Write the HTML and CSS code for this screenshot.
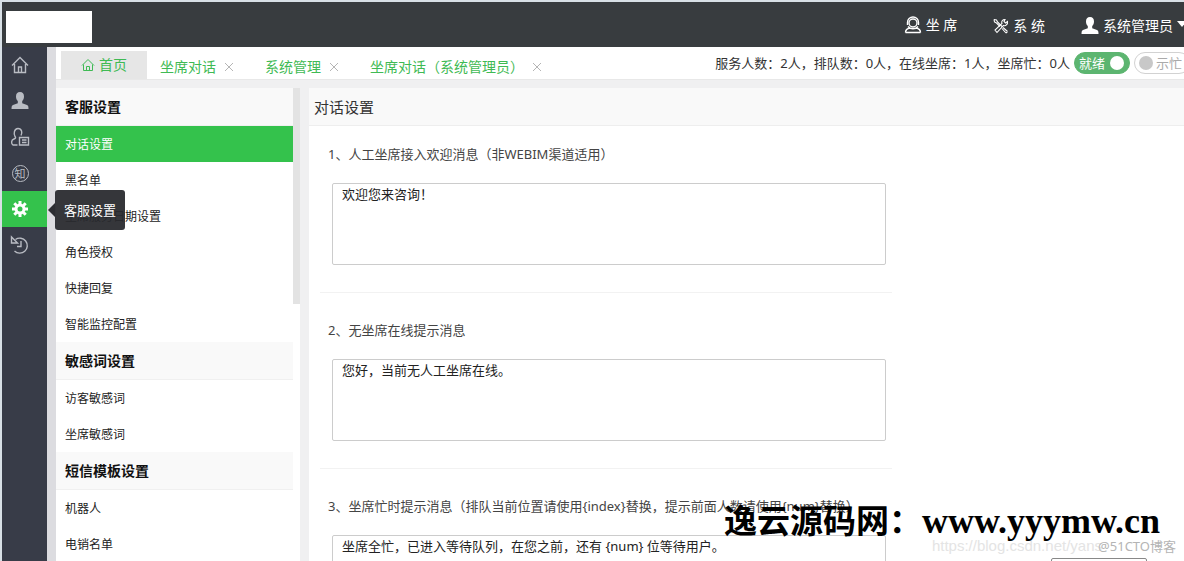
FILE: index.html
```html
<!DOCTYPE html>
<html lang="zh-CN">
<head>
<meta charset="utf-8">
<title>客服设置</title>
<link rel="stylesheet" href="styles.css">
</head>
<body>
<header class="topbar">
  <div class="logo"></div>
  <nav class="topnav">
    <a href="#"><svg viewBox="0 0 18 18" width="18" height="18"><circle cx="9" cy="7" r="4"/><path d="M3.500 9V6.500a5.500 5.500 0 0 1 11 0V9M4 10.500c2 3 8 3 10 0M1.500 16.500c0-3 2-4 4.500-4.500M16.500 16.500c0-3-2-4-4.500-4.500M1.500 16.500h15"/></svg>坐 席</a>
    <a href="#" class="low"><svg class="ico-tool" viewBox="0 0 16 16" width="16" height="16"><path d="M1 1.500l2.500.5 1 2L9 8.500M1 1.500l.5 2.500 2 1 3.500 3.500M10 9.500l4.500 4M9 10.500l4 4.500M14.500 13.500L13 15M14.500 3.500l-2 1.500-1.500-1.500 1-2c-2.500 0-4 2-3 4L2 12l2 2.500 6.500-7c2 .8 4.500-1 4-4z"/></svg>系 统</a>
    <a href="#" class="low"><svg class="ico-fill" viewBox="0 0 18 18" width="18" height="18"><path d="M9 0c2.700 0 4 1.700 4 4.500 0 2-.8 3.500-1.800 4.500v2.200l4.800 1.800c1 .4 1.500 1.200 1.500 4h-17c0-2.800.5-3.600 1.500-4l4.800-1.800V9C5.800 8 5 6.500 5 4.500 5 1.700 6.300 0 9 0z"/></svg>系统管理员<span class="caret"></span></a>
  </nav>
</header>
<div class="shell">
  <nav class="rail">
    <a href="#" aria-label="首页"><svg viewBox="0 0 18 18" width="18" height="18"><path d="M1 9.500L9 1.500l8 8M3.500 8v8.500h11V8M7.500 16.500V11h3v5.500"/></svg></a>
    <a href="#" aria-label="用户"><svg class="ico-fill" viewBox="0 0 18 18" width="18" height="18"><path d="M9 0c2.700 0 4 1.700 4 4.500 0 2-.8 3.500-1.800 4.500v2.200l4.800 1.800c1 .4 1.500 1.200 1.500 4h-17c0-2.800.5-3.600 1.500-4l4.800-1.800V9C5.800 8 5 6.500 5 4.500 5 1.700 6.300 0 9 0z"/></svg></a>
    <a href="#" aria-label="访客"><svg viewBox="0 0 20 20" width="20" height="20"><path d="M7.500 18H3c-2-1.500-2-5 1-6 2-.7 1.800-1.500 1-2.500C3.500 7 4 1.500 8 1.500S12.500 6 11 8.500M9.500 10.500h9v7.500h-9zM12 13h4.500M12 15.500h4.500"/></svg></a>
    <a href="#" aria-label="知识库"><span class="know">知</span></a>
    <a href="#" class="on" aria-label="客服设置"><svg class="gear" viewBox="0 0 18 18" width="18" height="18"><circle cx="9" cy="9" r="4"/><path d="M9 1v3M9 14v3M1 9h3M14 9h3M3.300 3.300l2.200 2.200M12.500 12.500l2.200 2.200M3.300 14.700l2.200-2.200M12.500 5.500l2.200-2.200"/></svg><span class="tip">客服设置</span></a>
    <a href="#" aria-label="历史"><svg viewBox="0 0 20 20" width="20" height="20"><path d="M5.500 4.500a7.500 7.500 0 1 1-1 11.500M1.500 2v6h6zM11 6v5.500H7"/></svg></a>
  </nav>
  <div class="main">
    <div class="tabbar">
      <nav class="tabs">
        <a href="#" class="tab home"><svg viewBox="0 0 14 14" width="14" height="14"><path d="M1 7.500l6-6 6 6M2.500 6.500v6h9v-6M5.500 12.500v-4h3v4"/></svg>首页</a>
        <a href="#" class="tab">坐席对话<svg class="x" viewBox="0 0 10 10" width="10" height="10"><path d="M1 1l8 8M9 1L1 9"/></svg></a>
        <a href="#" class="tab">系统管理<svg class="x" viewBox="0 0 10 10" width="10" height="10"><path d="M1 1l8 8M9 1L1 9"/></svg></a>
        <a href="#" class="tab">坐席对话（系统管理员）<svg class="x" viewBox="0 0 10 10" width="10" height="10"><path d="M1 1l8 8M9 1L1 9"/></svg></a>
      </nav>
      <div class="status">
        <span>服务人数：2人，排队数：0人，在线坐席：1人，坐席忙：0人</span>
        <button class="pill ready" type="button">就绪<i></i></button>
        <button class="pill" type="button"><i></i>示忙</button>
      </div>
    </div>
    <div class="panes">
      <aside class="side">
        <nav class="menu">
          <h2>客服设置</h2>
          <a href="#" class="on">对话设置</a>
          <a href="#">黑名单</a>
          <a href="#">坐席服务日期设置</a>
          <a href="#">角色授权</a>
          <a href="#">快捷回复</a>
          <a href="#">智能监控配置</a>
          <h2>敏感词设置</h2>
          <a href="#">访客敏感词</a>
          <a href="#">坐席敏感词</a>
          <h2>短信模板设置</h2>
          <a href="#">机器人</a>
          <a href="#">电销名单</a>
        </nav>
        <div class="thumb"></div>
      </aside>
      <main class="content">
        <h1>对话设置</h1>
        <form class="form">
          <div class="field">
            <label for="m1">1、人工坐席接入欢迎消息（非WEBIM渠道适用）</label>
            <textarea id="m1">欢迎您来咨询！</textarea>
          </div>
          <div class="field">
            <label for="m2">2、无坐席在线提示消息</label>
            <textarea id="m2">您好，当前无人工坐席在线。</textarea>
          </div>
          <div class="field">
            <label for="m3">3、坐席忙时提示消息（排队当前位置请使用{index}替换，提示前面人数请使用{num}替换）</label>
            <textarea id="m3">坐席全忙，已进入等待队列，在您之前，还有 {num} 位等待用户。</textarea>
          </div>
        </form>
      </main>
    </div>
  </div>
</div>
<button class="float-btn" type="button" aria-label="保存"></button>
<div class="mark-url">https://blog.csdn.net/yans</div>
<div class="mark-blog">@51CTO博客</div>
<div class="mark-site"><span>逸云源码网：</span>www.yyymw.cn</div>
</body>
</html>
```

FILE: styles.css
```css
* { box-sizing: border-box; }
body {
  margin: 0;
  height: 100vh;
  padding: 2px 0 0 2px;
  overflow: hidden;
  display: flex;
  flex-direction: column;
  background: #d8e0e6;
  color: #333;
  font: 13px/20px "Noto Sans", "Noto Sans CJK SC", sans-serif;
}
a { color: inherit; text-decoration: none; }
h1, h2 { margin: 0; }
svg { fill: none; stroke: currentColor; stroke-width: 1.4; flex: none; }
.ico-fill { fill: currentColor; stroke: none; }
.ico-tool { stroke-width: 1.1; }

.topbar {
  flex: none;
  height: 45px;
  display: flex;
  align-items: center;
  justify-content: space-between;
  padding-left: 4px;
  background: #383c3f;
  color: #fff;
}
.logo { width: 86px; height: 32px; background: #fff; margin-top: 5px; }
.topnav { display: flex; font-size: 14px; gap: 36px; margin-right: -3px; }
.topnav a { display: flex; align-items: center; gap: 4px; }
.topnav .low { padding-top: 2px; }
.caret { border: 5px solid transparent; border-top: 6px solid #fff; border-bottom: 0; margin-bottom: 4px; }

.shell { flex: 1; display: flex; min-height: 0; }
.rail { flex: none; width: 45px; background: #383c48; color: #b9bcc3; }
.rail a {
  height: 36px;
  display: flex;
  align-items: center;
  justify-content: center;
  padding-right: 9px;
  position: relative;
}
.rail .on { background: #34c24c; color: #fff; }
.rail .gear { stroke-width: 3; }
.know {
  width: 17px;
  height: 17px;
  border: 1px solid;
  border-radius: 50%;
  font-size: 11px;
  line-height: 15px;
  text-align: center;
}
.tip {
  position: absolute;
  left: 53px;
  top: -1px;
  z-index: 5;
  padding: 10px 9px;
  border-radius: 3px;
  background: rgba(40, 41, 46, 0.94);
  font-size: 13px;
  white-space: nowrap;
}
.tip::before {
  content: "";
  position: absolute;
  left: -7px;
  top: 13px;
  border: 7px solid transparent;
  border-right-color: #2c2d32;
  border-left: 0;
}

.main {
  flex: 1;
  min-width: 0;
  display: flex;
  flex-direction: column;
  border-left: 9px solid #dcdce0;
  background: #f0f0f1;
}
.tabbar {
  flex: none;
  height: 33px;
  display: flex;
  justify-content: space-between;
  background: #fff;
  border-bottom: 1px solid #e8e8e8;
  white-space: nowrap;
}
.tabs { display: flex; padding: 4px 0 0 5px; color: #3fba54; font-size: 14px; }
.tab { display: flex; align-items: center; gap: 8px; padding: 4px 18px 0 13px; }
.tab svg { stroke-width: 1; }
.home { gap: 4px; padding: 0 20px; background: #e6e6e6; }
.x { color: #b5b5b5; }
.status { display: flex; align-items: center; gap: 4px; margin-right: -6px; }
.pill {
  display: flex;
  align-items: center;
  gap: 3px;
  width: 56px;
  height: 22px;
  padding: 0 4px;
  border: 1px solid #d2d2d2;
  border-radius: 11px;
  font: inherit;
  background: #fff;
  color: #aaa;
}
.pill i { width: 14px; height: 14px; border-radius: 50%; background: #c8c8c8; }
.ready { gap: 5px; background: #5cb570; border-color: #5cb570; color: #fff; }
.ready i { background: #fff; }

.panes { flex: 1; display: flex; gap: 9px; min-height: 0; padding-top: 8px; }
.side { flex: none; width: 244px; display: flex; background: #fff; }
.menu { flex: 1; font-size: 12px; color: #222; overflow: hidden; }
.menu h2 {
  height: 38px;
  padding-left: 9px;
  font-size: 14px;
  line-height: 37px;
  color: #111;
  background: #f9f9f9;
  border-bottom: 1px solid #f0f0f0;
}
.menu a { display: block; height: 36px; padding-left: 9px; line-height: 38px; }
.menu .on { background: #34c24c; color: #fff; }
.thumb { width: 7px; height: 216px; background: #e3e3e3; }

.content { flex: 1; min-width: 0; background: #fff; overflow: hidden; }
.content h1 {
  height: 38px;
  padding-left: 5px;
  font-size: 15px;
  font-weight: 400;
  line-height: 38px;
  background: #f9f9f9;
  border-bottom: 1px solid #eee;
}
.form { max-width: 583px; padding-left: 11px; }
.field {
  display: flex;
  flex-direction: column;
  gap: 19px;
  padding: 27px 6px 27px 12px;
  border-bottom: 1px solid #f2f2f2;
}
.field:first-child { padding-top: 18px; }
.field label { margin-left: -4px; color: #444; white-space: nowrap; }
.field textarea {
  height: 82px;
  padding: 0 9px;
  border: 1px solid #ccc;
  border-radius: 2px;
  resize: none;
  font: inherit;
  color: #222;
}

.float-btn {
  position: absolute;
  right: 37px;
  bottom: -27px;
  width: 96px;
  height: 30px;
  border: 1px solid #888;
  border-radius: 2px;
  background: #fff;
}
.mark-url, .mark-blog, .mark-site { position: absolute; white-space: nowrap; }
.mark-url { right: 82px; bottom: 5px; font: 15px/20px "Liberation Sans", sans-serif; color: #e4e4e4; }
.mark-blog { right: 8px; bottom: 5px; color: #b4b4b4; }
.mark-site {
  right: 24px;
  bottom: 19px;
  color: #000;
  font: bold 36px/40px "Liberation Serif", "Noto Sans CJK SC", serif;
}
.mark-site span { font-size: 33px; }
```
